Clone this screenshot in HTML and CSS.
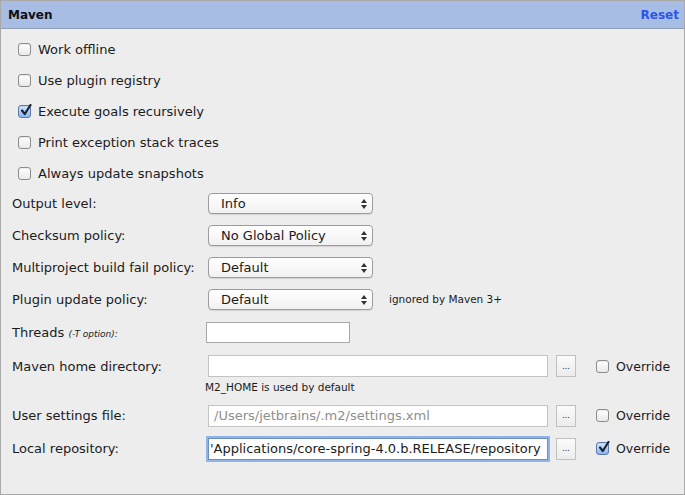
FILE: index.html
```html
<!DOCTYPE html>
<html>
<head>
<meta charset="utf-8">
<link rel="stylesheet" href="styles.css">
</head>
<body>
<div class="panel">
  <div class="header">
    <span class="title">Maven</span>
    <span class="reset">Reset</span>
  </div>
  <div class="body">
    <div class="checks">
      <label class="crow"><span class="cb"></span>Work offline</label>
      <label class="crow"><span class="cb"></span>Use plugin registry</label>
      <label class="crow"><span class="cb checked"><svg viewBox="0 0 13 13" width="13" height="13"><path d="M3 6.5 L5.8 10 L11.5 1" fill="none" stroke="#1a2333" stroke-width="2.2" stroke-linecap="round" stroke-linejoin="round"/></svg></span>Execute goals recursively</label>
      <label class="crow"><span class="cb"></span>Print exception stack traces</label>
      <label class="crow"><span class="cb"></span>Always update snapshots</label>
    </div>
    <div class="srow"><span class="lbl">Output level:</span><span class="sel">Info<span class="arr"></span></span></div>
    <div class="srow"><span class="lbl">Checksum policy:</span><span class="sel">No Global Policy<span class="arr"></span></span></div>
    <div class="srow"><span class="lbl">Multiproject build fail policy:</span><span class="sel">Default<span class="arr"></span></span></div>
    <div class="srow"><span class="lbl">Plugin update policy:</span><span class="sel">Default<span class="arr"></span></span><span class="note">ignored by Maven 3+</span></div>
    <div class="trow"><span class="lbl">Threads <i class="small">(-T option):</i></span><span class="tin"></span></div>
    <div class="frow"><span class="lbl">Maven home directory:</span><span class="fin"></span><span class="btn">...</span><label class="ov"><span class="cb"></span>Override</label></div>
    <div class="hint">M2_HOME is used by default</div>
    <div class="frow tall"><span class="lbl">User settings file:</span><span class="fin gray">/Users/jetbrains/.m2/settings.xml</span><span class="btn">...</span><label class="ov"><span class="cb"></span>Override</label></div>
    <div class="frow tall"><span class="lbl">Local repository:</span><span class="fin focus"><span class="scroll">'Applications/core-spring-4.0.b.RELEASE/repository</span></span><span class="btn">...</span><label class="ov"><span class="cb checked"><svg viewBox="0 0 13 13" width="13" height="13"><path d="M3 6.5 L5.8 10 L11.5 1" fill="none" stroke="#1a2333" stroke-width="2.2" stroke-linecap="round" stroke-linejoin="round"/></svg></span>Override</label></div>
  </div>
</div>
</body>
</html>
```

FILE: styles.css
```css
html, body {
  margin: 0;
  padding: 0;
  background: #ededed;
}
body {
  font-family: "DejaVu Sans", "Liberation Sans", sans-serif;
  font-size: 13px;
  color: #1b1b1b;
}
.panel {
  width: 683px;
  height: 493px;
  border: 1px solid #a9a9a9;
  background: #ededed;
  box-sizing: content-box;
  position: relative;
}
.header {
  height: 27px;
  background: #a8bde3;
  border-bottom: 1px solid #8e9bb4;
  display: flex;
  align-items: center;
  justify-content: space-between;
  padding: 0 5px 0 7px;
  font-weight: bold;
  font-size: 12px;
}
.title { color: #111; }
.reset { color: #2a55ee; }
.body {
  padding: 5px 0 0 11px;
}
.checks {
  padding-left: 6px;
  margin-bottom: -2px;
}
.crow {
  display: flex;
  align-items: center;
  height: 31px;
}
.cb {
  width: 11px;
  height: 11px;
  border: 1px solid #8c8c8c;
  border-radius: 3px;
  background: linear-gradient(#ffffff, #e9e9e9);
  margin-right: 7px;
  flex: none;
  position: relative;
  box-shadow: inset 0 1px 1px rgba(0,0,0,0.08);
}
.cb.checked {
  background: linear-gradient(#d6e6fb, #8ab6ef);
  border-color: #5a79a8;
}
.cb svg {
  position: absolute;
  left: 0;
  top: -2px;
}
.srow, .trow, .frow {
  display: flex;
  align-items: center;
  height: 32px;
}
.lbl {
  width: 196px;
  flex: none;
}
.small {
  font-size: 9px;
}
.sel {
  border: 1px solid #9c9c9c;
  border-radius: 4px;
  background: linear-gradient(#ffffff, #f1f1f1);
  display: flex;
  align-items: center;
  padding-left: 12px;
  box-sizing: border-box;
  width: 165px;
  height: 21px;
  position: relative;
  box-shadow: 0 1px 1px rgba(0,0,0,0.1);
}
.arr {
  position: absolute;
  right: 8px;
  top: 5px;
  width: 0;
  height: 0;
}
.arr::before, .arr::after {
  content: "";
  position: absolute;
  left: -3px;
  border-left: 3px solid transparent;
  border-right: 3px solid transparent;
}
.arr::before {
  top: 0;
  border-bottom: 4px solid #333;
}
.arr::after {
  top: 6px;
  border-top: 4px solid #333;
}
.note {
  margin-left: 16px;
  font-size: 10.5px;
}
.trow {
  height: 35px;
}
.tin {
  width: 144px;
  height: 21px;
  box-sizing: border-box;
  border: 1px solid #a8a8a8;
  background: #fff;
  margin-left: -2px;
}
.fin {
  width: 340px;
  height: 22px;
  box-sizing: border-box;
  border: 1px solid #c4c4c4;
  background: #fff;
  display: flex;
  align-items: center;
  padding-left: 5px;
  overflow: hidden;
  white-space: nowrap;
}
.fin.gray { color: #8e8e8e; }
.fin.focus {
  border: 1px solid #6c8fbf;
  box-shadow: 0 0 0 2px #8fb5e8;
  padding-left: 1px;
}
.btn {
  width: 20px;
  height: 22px;
  box-sizing: border-box;
  border: 1px solid #c0c0c0;
  background: linear-gradient(#fbfbfb, #ececec);
  margin-left: 8px;
  display: flex;
  align-items: center;
  justify-content: center;
  font-size: 8px;
}
.ov {
  display: flex;
  align-items: center;
  margin-left: 20px;
  font-size: 12.5px;
}
.hint {
  height: 19px;
  margin-top: -2px;
  padding-left: 193px;
  font-size: 10.5px;
  line-height: 14px;
}
.frow.tall {
  height: 33px;
}
```
